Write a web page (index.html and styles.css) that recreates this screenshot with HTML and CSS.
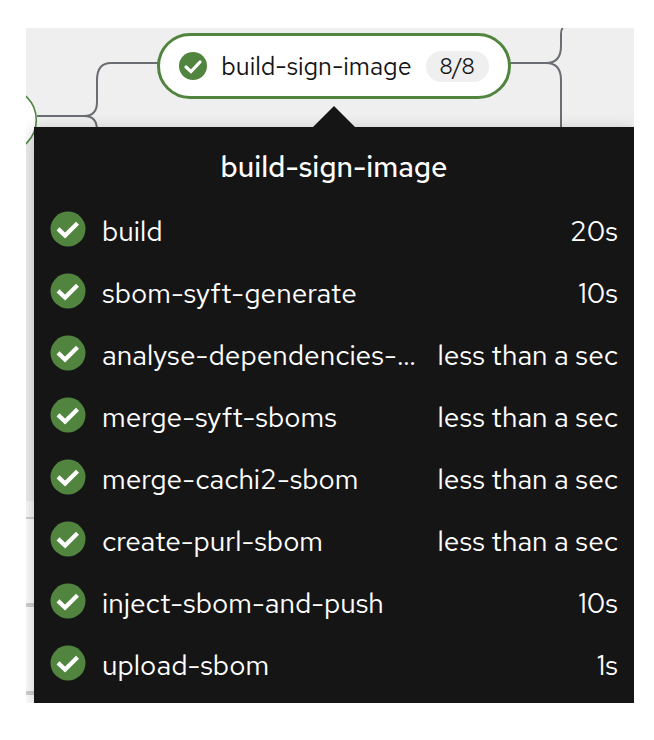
FILE: index.html
```
<!DOCTYPE html>
<html lang="en">
<head>
<meta charset="utf-8">
<title>build-sign-image</title>
<link rel="stylesheet" href="styles.css">
</head>
<body>
<svg class="defs" aria-hidden="true">
  <symbol id="check" viewBox="0 0 36 36">
    <circle cx="18" cy="18" r="17.5" fill="#51853f"/>
    <path d="M8 17.9 L15.1 24.6 L27.5 12.3" fill="none" stroke="#fff" stroke-width="4.2"/>
  </symbol>
  <symbol id="check-round" viewBox="0 0 28 28">
    <circle cx="14" cy="14" r="14" fill="#51853f"/>
    <path d="M7 15 L12 19.6 L21 10" fill="none" stroke="#fff" stroke-width="3.2" stroke-linecap="round"/>
  </symbol>
</svg>
<main class="stage">
  <div class="backdrop" aria-hidden="true"></div>
  <svg class="edges" aria-hidden="true">
    <g fill="none" stroke="#6a6e73" stroke-width="2">
      <path d="M11 88 H58 Q71 88 71 74 V52 Q71 35 85 35 H132"/>
      <path d="M58 88 Q71 88 71 102"/>
      <path d="M484 35 H520 Q535 35 535 18 V6 Q535 1 537 0" />
      <path d="M520 35 Q535 35 535 52 V100"/>
    </g>
    <circle cx="-22" cy="92" r="32.3" fill="#fff" stroke="#51853f" stroke-width="1.6"/>
  </svg>
  <div class="content">
    <div class="node">
      <svg class="node-icon" aria-hidden="true"><use href="#check-round"/></svg>
      <span class="node-name">build-sign-image</span>
      <span class="badge">8/8</span>
    </div>
    <div class="arrow"></div>
    <section class="tooltip">
      <h1>build-sign-image</h1>
      <ul>
        <li><svg class="icon"><use href="#check"/></svg><span class="name">build</span><span>20s</span></li>
        <li><svg class="icon"><use href="#check"/></svg><span class="name">sbom-syft-generate</span><span>10s</span></li>
        <li><svg class="icon"><use href="#check"/></svg><span class="name">analyse-dependencies-…</span><span>less than a sec</span></li>
        <li><svg class="icon"><use href="#check"/></svg><span class="name">merge-syft-sboms</span><span>less than a sec</span></li>
        <li><svg class="icon"><use href="#check"/></svg><span class="name">merge-cachi2-sbom</span><span>less than a sec</span></li>
        <li><svg class="icon"><use href="#check"/></svg><span class="name">create-purl-sbom</span><span>less than a sec</span></li>
        <li><svg class="icon"><use href="#check"/></svg><span class="name">inject-sbom-and-push</span><span>10s</span></li>
        <li><svg class="icon"><use href="#check"/></svg><span class="name">upload-sbom</span><span>1s</span></li>
      </ul>
    </section>
  </div>
</main>
</body>
</html>
```
FILE: styles.css
```
* { box-sizing: border-box; }
body {
  margin: 0;
  background: #fff;
  color: #151515;
  font-family: "Red Hat Text", "Open Sans", sans-serif;
}
.defs { position: absolute; width: 0; height: 0; }
.stage {
  position: relative;
  margin: 28px 20px 37px 26px;
  overflow: hidden;
}
.backdrop {
  position: absolute;
  inset: 0;
  background:
    linear-gradient(#d2d2d2, #d2d2d2) 0 575px / 100% 4px no-repeat,
    linear-gradient(#d2d2d2, #d2d2d2) 0 663px / 100% 4px no-repeat,
    linear-gradient(#efefef 473px, #fafafa 473px, #fafafa 489px, #d2d2d2 489px, #d2d2d2 491px, #fff 491px);
}
.edges { position: absolute; inset: 0; width: 100%; height: 100%; }
.content {
  position: relative;
  display: flex;
  flex-direction: column;
  align-items: center;
  margin-left: 8px;
  padding-top: 5px;
}
.node {
  display: flex;
  align-items: center;
  gap: 14px;
  height: 66px;
  padding: 0 19px;
  border: 3px solid #51853f;
  border-radius: 33px;
  background: #fff;
  font-size: 25px;
}
.node-icon { width: 28px; height: 28px; }
.badge {
  padding: 0 14px;
  border-radius: 16px;
  background: #efefef;
  font-size: 22px;
  line-height: 31px;
}
.arrow {
  width: 42px;
  height: 21px;
  margin-top: 7px;
  background: #151515;
  clip-path: polygon(50% 0, 100% 100%, 0 100%);
}
.tooltip {
  width: 100%;
  padding: 20px 16px 6px;
  background: #151515;
  color: #fff;
  box-shadow: 0 4px 16px rgba(3, 3, 3, 0.24);
}
h1 {
  margin: 0 0 14px;
  font-size: 29px;
  font-weight: 500;
  line-height: 40px;
  text-align: center;
}
ul { margin: 0; padding: 0; list-style: none; }
li {
  display: flex;
  align-items: center;
  height: 62px;
  padding-bottom: 2px;
  font-size: 28px;
  white-space: nowrap;
}
.icon { flex: none; width: 36px; height: 36px; margin: 0 16px 4px 0; }
.name { flex: 1; }
```
